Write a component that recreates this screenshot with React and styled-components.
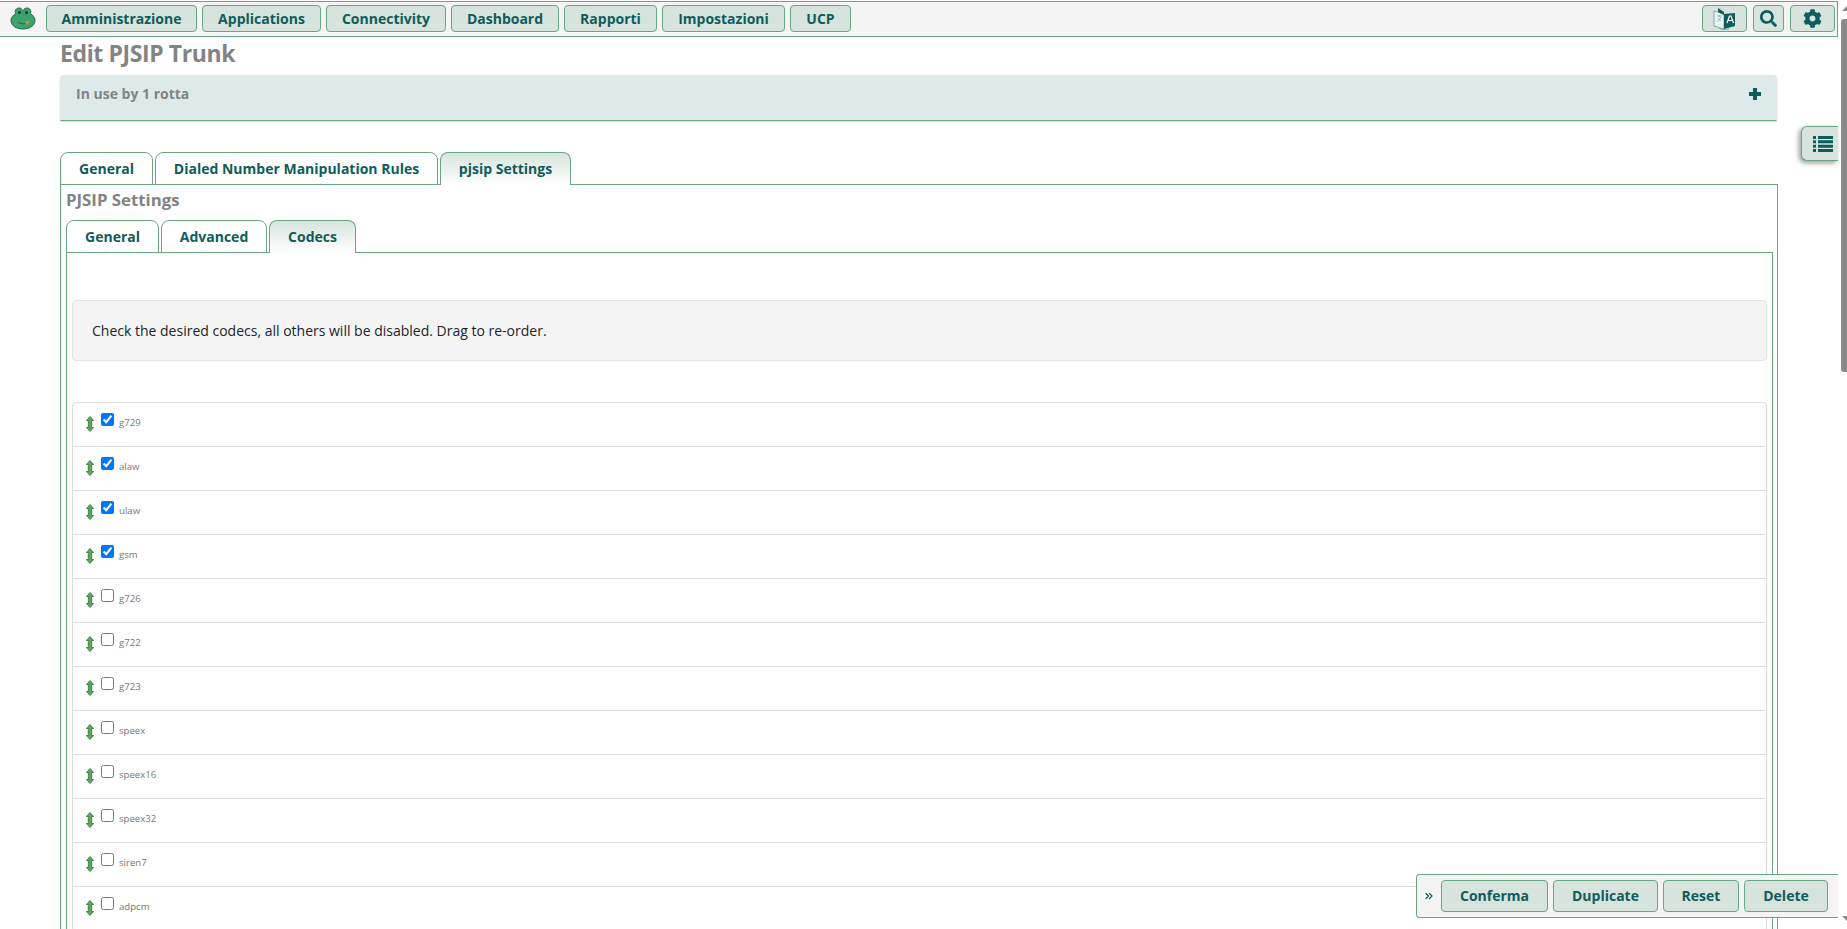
import React from 'react'
import styled, { createGlobalStyle } from 'styled-components'
import { FaSearch, FaCog } from 'react-icons/fa'
import { ChevronsRight } from 'lucide-react'

const green = '#69a684'
const teal = '#0f5c5c'
const FONT = '"Open Sans", "Noto Sans", sans-serif'

const GlobalStyle = createGlobalStyle`
  html, body {
    margin: 0;
    height: 929px;
    overflow: hidden;
    background: #fff;
    font-family: ${FONT};
  }
  * { box-sizing: border-box; }
`

const Page = styled.div`
  height: 929px;
  overflow: hidden;
  position: relative;
`

const TopBar = styled.nav`
  margin: 1px 9px 0 0;
  height: 36px;
  background: #f4f4f4;
  border-top: 1px solid ${green};
  border-bottom: 1px solid ${green};
  border-right: 1px solid ${green};
  display: flex;
  align-items: center;
  padding: 0 2px 1px 10px;
`

const Logo = styled.svg`
  width: 26px;
  height: 23px;
  margin-right: 10px;
  flex: none;
`

const NavButton = styled.button`
  height: 27px;
  padding: 0 0 1px;
  margin-right: 5px;
  width: ${p => p.$w}px;
  background: #d7e4de;
  border: 1px solid ${green};
  border-radius: 4px;
  color: ${teal};
  font: 700 14px ${FONT};
  display: flex;
  align-items: center;
  justify-content: center;
  flex: none;
  &:last-child {
    margin-right: 0;
  }
`

const IconButton = styled(NavButton)`
  padding: 0;
  margin-right: 6px;
`

const Spacer = styled.div`
  flex: 1;
`

const Content = styled.main`
  padding: 0 69px 0 60px;
`

const Title = styled.h1`
  margin: 0;
  height: 38px;
  line-height: 32px;
  font-size: 23px;
  letter-spacing: -0.4px;
  font-weight: 700;
  color: #838383;
`

const CollapsePanel = styled.div`
  height: 46px;
  margin-right: 1px;
  background: #dcebea;
  border: 1px solid #e3e8e6;
  border-bottom: 1px solid ${green};
  border-radius: 4px 4px 0 0;
  box-shadow: 0 1px 2px rgba(0, 0, 0, 0.15);
  padding: 0 15px;
  display: flex;
  justify-content: space-between;
  margin-bottom: 31px;
  color: #838383;
  font-size: 14px;
  font-weight: 700;
  line-height: 35px;
`

const PlusIcon = styled.svg`
  width: 12px;
  height: 12px;
  margin: 12px 0 0 0;
  fill: ${teal};
`

const TabRow = styled.div`
  display: flex;
  gap: 2px;
  height: 33px;
  margin-bottom: -1px;
  position: relative;
`

const Tab = styled.div`
  width: ${p => p.$w}px;
  height: 33px;
  border: 1px solid ${green};
  border-bottom: ${p => (p.$active ? 'none' : `1px solid ${green}`)};
  padding-bottom: ${p => (p.$active ? '1px' : '0')};
  border-radius: 8px 8px 0 0;
  background: ${p => (p.$active ? 'linear-gradient(#d7e4de, #fff)' : '#fff')};
  color: ${teal};
  font-size: 14px;
  font-weight: 700;
  display: flex;
  align-items: center;
  justify-content: center;
`

const OuterPane = styled.section`
  border: 1px solid ${green};
  border-bottom: none;
  padding: 0 4px 0 5px;
  height: 760px;
`

const SubTitle = styled.h2`
  margin: 0;
  height: 35px;
  line-height: 30px;
  font-size: 16.8px;
  font-weight: 700;
  color: #838383;
`

const InnerPane = styled.div`
  border: 1px solid ${green};
  border-bottom: none;
  padding: 47px 5px 0 5px;
  height: 720px;
`

const Notice = styled.div`
  height: 61px;
  background: #f4f4f4;
  border: 1px solid #e3e3e3;
  border-radius: 4px;
  padding: 0 19px;
  display: flex;
  align-items: center;
  font-size: 14px;
  color: #212529;
  margin-bottom: 41px;
`

const CodecList = styled.ul`
  list-style: none;
  margin: 0;
  padding: 0;
  border: 1px solid #ddd;
  border-radius: 4px;
`

const CodecRow = styled.li`
  height: 44px;
  border-bottom: 1px solid #ddd;
  display: flex;
  align-items: flex-start;
  padding: 10px 0 0 12px;
`

const DragIcon = styled.svg`
  width: 10px;
  height: 16px;
  margin: 3px 6px 0 0;
  flex: none;
`

const CodecCheck = styled.input.attrs({ type: 'checkbox', readOnly: true })`
  width: 13px;
  height: 13px;
  margin: 0 5px 0 0;
  accent-color: #0075ff;
  flex: none;
`

const CodecName = styled.label`
  font-size: 9.6px;
  color: #777;
  line-height: 20px;
`

const SideToggle = styled.button`
  position: absolute;
  top: 126px;
  right: 9px;
  width: 37px;
  height: 35px;
  background: #d7e4de;
  border: 1px solid ${green};
  border-right: none;
  border-radius: 6px 0 0 6px;
  box-shadow: -2px 2px 5px rgba(0, 0, 0, 0.4);
  color: ${teal};
  padding: 0 0 0 11px;
  display: flex;
  align-items: center;
`

const ActionBar = styled.div`
  position: absolute;
  left: 1416px;
  top: 874px;
  width: 422px;
  height: 44px;
  background: #f4f4f4;
  border: 1px solid ${green};
  border-right: none;
  border-radius: 4px 0 0 4px;
  display: flex;
  align-items: center;
  padding-left: 6px;
`

const ArrowIcon = styled(ChevronsRight)`
  color: ${teal};
  width: 12px;
  height: 12px;
  margin-right: 6px;
  flex: none;
`

const ActionButton = styled(NavButton)`
  height: 32px;
  padding: 0 0 2px;
  &:last-child {
    margin-right: 5px;
  }
`

const ScrollTrack = styled.div`
  position: absolute;
  top: 0;
  right: 0;
  width: 6px;
  height: 929px;
  background: #fff;
`

const ScrollThumb = styled.div`
  position: absolute;
  top: 19px;
  left: 0;
  width: 6px;
  height: 353px;
  background: #8a8a8a;
  border-radius: 3px 0 0 3px;
`

const ScrollArrow = styled.div`
  position: absolute;
  right: 0;
  top: ${p => (p.$up ? '6px' : '916px')};
  width: 0;
  height: 0;
  border-left: 5px solid transparent;
  border-bottom: ${p => (p.$up ? '5px solid #8a8a8a' : '0')};
  border-top: ${p => (p.$up ? '0' : '5px solid #8a8a8a')};
`

const navItems = [
  ['Amministrazione', 151],
  ['Applications', 119],
  ['Connectivity', 120],
  ['Dashboard', 108],
  ['Rapporti', 93],
  ['Impostazioni', 123],
  ['UCP', 61]
]

const codecs = [
  ['g729', true],
  ['alaw', true],
  ['ulaw', true],
  ['gsm', true],
  ['g726', false],
  ['g722', false],
  ['g723', false],
  ['speex', false],
  ['speex16', false],
  ['speex32', false],
  ['siren7', false],
  ['adpcm', false]
]

const FrogLogo = () => (
  <Logo viewBox='0 0 26 23'>
    <path
      d='M9 1c1.800 0 3 1 3.500 2.300h1C14 2 15.200 1 17 1c2.200 0 3.800 1.600 3.800 3.600 0 .8-.2 1.400-.5 2C23 8.300 25 10.500 25 13.500 25 18.500 19.800 22 13 22S1 18.500 1 13.500c0-3 2-5.200 4.700-6.900-.3-.6-.5-1.200-.5-2C5.200 2.600 6.800 1 9 1z'
      fill='#3da36e'
      stroke='#1f6b4a'
      strokeWidth='1'
    />
    <circle cx='9.500' cy='5.500' r='1.500' fill='#12352a' />
    <circle cx='16.500' cy='5.500' r='1.500' fill='#12352a' />
    <path d='M8 15c3 2.500 8 2.500 11-.5' fill='none' stroke='#1f6b4a' strokeWidth='1' />
    <path d='M15 16l3-2.500 1.500 1.500-3 2.500z' fill='#e8912d' />
  </Logo>
)

const TranslateIcon = () => (
  <svg width='28' height='24' viewBox='0 0 28 24'>
    <path d='M3 4l10 3v15L3 19z' fill='#eef4f2' stroke='#7fa9b0' strokeWidth='1' />
    <path d='M13 7l11-1v13l-11 3z' fill={teal} />
    <path d='M7 1l6 4v3L7 5z' fill={teal} />
    <path d='M16 16l2.500-7h1.500l2.500 7M17.300 13.500h4' fill='none' stroke='#fff' strokeWidth='1.200' />
    <path d='M6 9h5M8.500 8v2M10 10c-.5 2-2 3.500-4 4.500M7 11c.7 1.300 1.700 2.300 3 3' fill='none' stroke='#7fa9b0' strokeWidth='.8' />
    <path d='M8 21c3 2 7 2 10 .5' fill='none' stroke='#7fa9b0' strokeWidth='1' />
  </svg>
)

const DragHandle = () => (
  <DragIcon viewBox='0 0 10 16'>
    <path
      d='M5 .5L8.500 4.500H6.700v7h1.800L5 15.500 1.500 11.500h1.800v-7H1.500z'
      fill='#5ca85c'
      stroke='#2f6f3a'
      strokeWidth='.8'
    />
  </DragIcon>
)

const ListIcon = () => (
  <svg width='20' height='16' viewBox='0 0 20 16' fill='currentColor'>
    <path d='M0 0h3v3H0zM5 0h15v3H5zM0 4.300h3v3H0zM5 4.300h15v3H5zM0 8.700h3v3H0zM5 8.700h15v3H5zM0 13h3v3H0zM5 13h15v3H5z' />
  </svg>
)

const App = () => (
  <Page>
    <GlobalStyle />
    <TopBar>
      <FrogLogo />
      {navItems.map(([label, w]) => (
        <NavButton key={label} $w={w}>{label}</NavButton>
      ))}
      <Spacer />
      <IconButton $w={45}><TranslateIcon /></IconButton>
      <IconButton $w={31}><FaSearch size={17} /></IconButton>
      <IconButton $w={45}><FaCog size={19} /></IconButton>
    </TopBar>

    <Content>
      <Title>Edit PJSIP Trunk</Title>
      <CollapsePanel>
        <span>In use by 1 rotta</span>
        <PlusIcon viewBox='0 0 12 12'>
          <path d='M4 0h4v4h4v4H8v4H4V8H0V4h4z' />
        </PlusIcon>
      </CollapsePanel>

      <TabRow>
        <Tab $w={93}>General</Tab>
        <Tab $w={283}>Dialed Number Manipulation Rules</Tab>
        <Tab $w={131} $active>pjsip Settings</Tab>
      </TabRow>
      <OuterPane>
        <SubTitle>PJSIP Settings</SubTitle>
        <TabRow>
          <Tab $w={93}>General</Tab>
          <Tab $w={106}>Advanced</Tab>
          <Tab $w={87} $active>Codecs</Tab>
        </TabRow>
        <InnerPane>
          <Notice>Check the desired codecs, all others will be disabled. Drag to re-order.</Notice>
          <CodecList>
            {codecs.map(([name, on]) => (
              <CodecRow key={name}>
                <DragHandle />
                <CodecCheck checked={on} />
                <CodecName>{name}</CodecName>
              </CodecRow>
            ))}
          </CodecList>
        </InnerPane>
      </OuterPane>
    </Content>

    <SideToggle><ListIcon /></SideToggle>

    <ActionBar>
      <ArrowIcon strokeWidth={2.5} />
      <ActionButton $w={107}>Conferma</ActionButton>
      <ActionButton $w={105}>Duplicate</ActionButton>
      <ActionButton $w={76}>Reset</ActionButton>
      <ActionButton $w={84}>Delete</ActionButton>
    </ActionBar>

    <ScrollTrack>
      <ScrollArrow $up />
      <ScrollThumb />
      <ScrollArrow />
    </ScrollTrack>
  </Page>
)

export default App
